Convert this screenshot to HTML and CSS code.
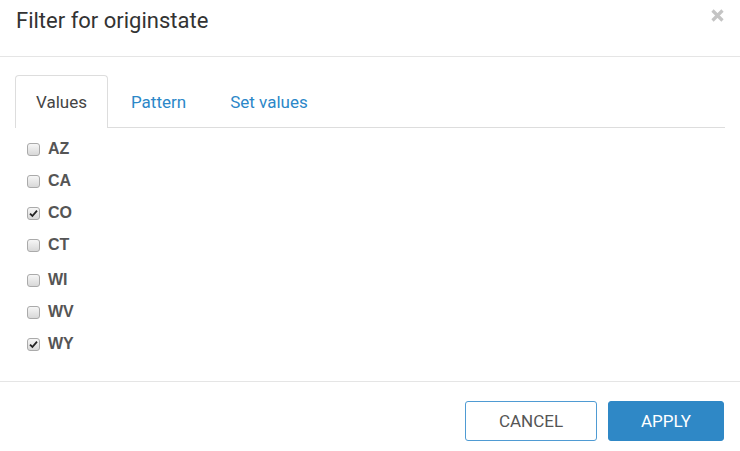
FILE: index.html
```html
<!DOCTYPE html>
<html lang="en">
<head>
  <meta charset="UTF-8">
  <title>Filter for originstate</title>
  <link rel="stylesheet" href="styles.css">
</head>
<body>
<div class="modal">
  <div class="modal-header">
    <h4 class="modal-title">Filter for originstate</h4>
    <span class="close">
      <svg width="13" height="13" viewBox="0 0 13 13"><path d="M1.5 1.5 L11.5 11.5 M11.5 1.5 L1.5 11.5" stroke="#c4c4c4" stroke-width="3.2"/></svg>
    </span>
  </div>

  <div class="modal-body">
    <ul class="tabs">
      <li class="tab active">Values</li>
      <li class="tab">Pattern</li>
      <li class="tab">Set values</li>
    </ul>

    <div class="value-list">
      <label class="value"><span class="box"></span>AZ</label>
      <label class="value"><span class="box"></span>CA</label>
      <label class="value"><span class="box checked"><svg width="9" height="9" viewBox="0 0 9 9"><path d="M1 4.6 L3.4 7 L8 1.6" fill="none" stroke="#222" stroke-width="1.8"/></svg></span>CO</label>
      <label class="value"><span class="box"></span>CT</label>
      <label class="value group-start"><span class="box"></span>WI</label>
      <label class="value"><span class="box"></span>WV</label>
      <label class="value"><span class="box checked"><svg width="9" height="9" viewBox="0 0 9 9"><path d="M1 4.6 L3.4 7 L8 1.6" fill="none" stroke="#222" stroke-width="1.8"/></svg></span>WY</label>
    </div>
  </div>

  <div class="modal-footer">
    <button class="btn btn-cancel">CANCEL</button>
    <button class="btn btn-apply">APPLY</button>
  </div>
</div>
</body>
</html>
```

FILE: styles.css
```css
body {
  margin: 0;
  background: #fff;
  font-family: Roboto, "Liberation Sans", sans-serif;
}

.modal {
  width: 740px;
  height: 451px;
  background: #fff;
}

.modal-header {
  height: 57px;
  padding: 0 16px;
  border-bottom: 1px solid #e5e5e5;
  display: flex;
  justify-content: space-between;
  align-items: flex-start;
  box-sizing: border-box;
}

.modal-title {
  margin: 0;
  padding-top: 6px;
  font-size: 22px;
  font-weight: 400;
  line-height: 30px;
  color: #333;
}

.close {
  margin-top: 9px;
  margin-right: 0;
  line-height: 0;
}

.modal-body {
  padding: 18px 15px 0 15px;
  height: 324px;
  box-sizing: border-box;
}

.tabs {
  list-style: none;
  margin: 0;
  padding: 0;
  display: flex;
  border-bottom: 1px solid #ddd;
}

.tab {
  height: 52px;
  padding: 0 21px;
  font-size: 17px;
  line-height: 52px;
  color: #2b87c8;
  border: 1px solid transparent;
  border-bottom: none;
  border-radius: 4px 4px 0 0;
  margin-bottom: -1px;
  box-sizing: border-box;
}

.tab.active {
  padding: 0 20px;
  color: #444;
  border-color: #ddd;
  background: #fff;
  height: 53px;
  margin-right: 1px;
}

.value-list {
  padding: 5px 0 0 12px;
  display: flex;
  flex-direction: column;
}

.value {
  height: 32px;
  display: flex;
  align-items: center;
  font-family: "Liberation Sans", Arial, sans-serif;
  font-size: 16px;
  font-weight: bold;
  color: #555;
}

.value.group-start {
  margin-top: 3px;
}

.box {
  width: 13px;
  height: 13px;
  margin-right: 8px;
  border: 1px solid #aaa;
  border-radius: 3px;
  background: linear-gradient(#f6f6f6, #d8d8d8);
  box-sizing: border-box;
  display: flex;
  align-items: center;
  justify-content: center;
}

.modal-footer {
  border-top: 1px solid #e5e5e5;
  padding: 19px 16px 0 0;
  display: flex;
  justify-content: flex-end;
  gap: 11px;
}

.btn {
  height: 40px;
  font-family: Roboto, "Liberation Sans", sans-serif;
  font-size: 17px;
  border-radius: 3px;
  cursor: pointer;
}

.btn-cancel {
  width: 132px;
  background: #fff;
  color: #555;
  border: 1px solid #4f9bd3;
}

.btn-apply {
  width: 116px;
  background: #2f88c6;
  color: #fff;
  border: 1px solid #2f88c6;
}
```
